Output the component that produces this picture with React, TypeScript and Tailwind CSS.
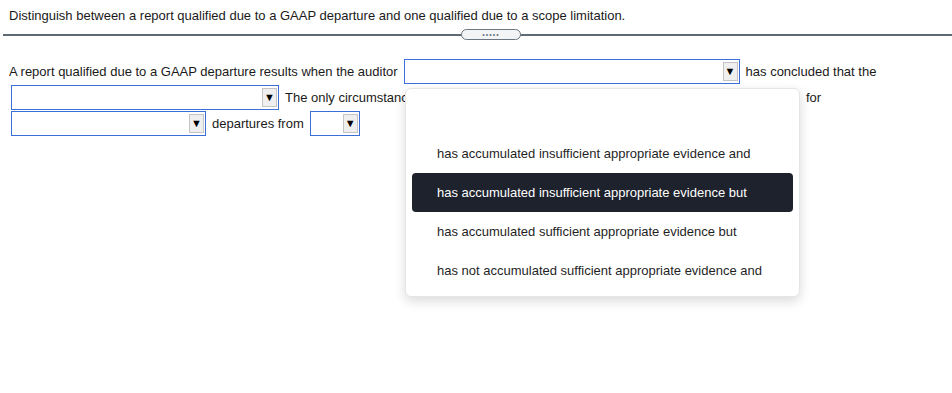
import React from "react";

function Sel({ w }: { w: string }) {
  return (
    <div
      className={`relative mx-[2px] h-[25px] ${w} shrink-0 border border-[#3a6fd8] bg-white`}
    >
      <div className="absolute right-[1px] top-[2px] flex h-[19px] w-[15px] items-center justify-center border border-[#c4c4c4] bg-[#efefef] text-[11px] leading-none text-black">
        ▼
      </div>
    </div>
  );
}

export default function App() {
  const items = [
    "",
    "has accumulated insufficient appropriate evidence and",
    "has accumulated insufficient appropriate evidence but",
    "has accumulated sufficient appropriate evidence but",
    "has not accumulated sufficient appropriate evidence and",
  ];
  return (
    <div
      className="relative h-[393px] w-[952px] overflow-hidden bg-white text-[13px] text-[#1a1a1a]"
      style={{ fontFamily: '"Liberation Sans", Arial, sans-serif' }}
    >
      <div className="px-[9px] pt-[8px] leading-[16px]">
        Distinguish between a report qualified due to a GAAP departure and one qualified due to a scope limitation.
      </div>
      <div className="relative ml-[3px] mt-[10px] h-[2px] bg-[#5f6a72]">
        <div className="absolute left-[458px] top-[-5px] flex h-[11px] w-[60px] items-center justify-center rounded-full border border-[#6b7680] bg-[#f2f4f6] text-[7px] leading-none tracking-[1px] text-[#6b7680]">
          •••••
        </div>
      </div>
      <div className="mt-[23px] flex w-[935px] flex-wrap items-center gap-x-[4px] gap-y-px pl-[9px] leading-[16px]">
        <span className="whitespace-nowrap">A report qualified due to a GAAP departure results when the auditor</span>
        <Sel w="w-[336px]" />
        <span className="whitespace-nowrap">has concluded that the</span>
        <Sel w="w-[268px]" />
        <span className="whitespace-nowrap">
          {"The only circumstance in which an auditor may legally issue this type of qualified report is\u00A0 for"}
        </span>
        <Sel w="w-[195px]" />
        <span className="whitespace-nowrap">departures from</span>
        <Sel w="w-[50px]" />
      </div>

      <div className="absolute left-[405px] top-[88px] w-[395px] rounded-[6px] border border-[#e3e5e8] bg-white p-[6px] shadow-[0_4px_12px_rgba(0,0,0,0.15)]">
        {items.map((t, i) => (
          <div
            key={i}
            className={`flex h-[39px] items-center rounded-[4px] pl-[25px] text-[13px] ${
              i === 2 ? "bg-[#1e222d] text-white" : "text-[#1f1f1f]"
            }`}
          >
            {t}
          </div>
        ))}
      </div>
    </div>
  );
}
